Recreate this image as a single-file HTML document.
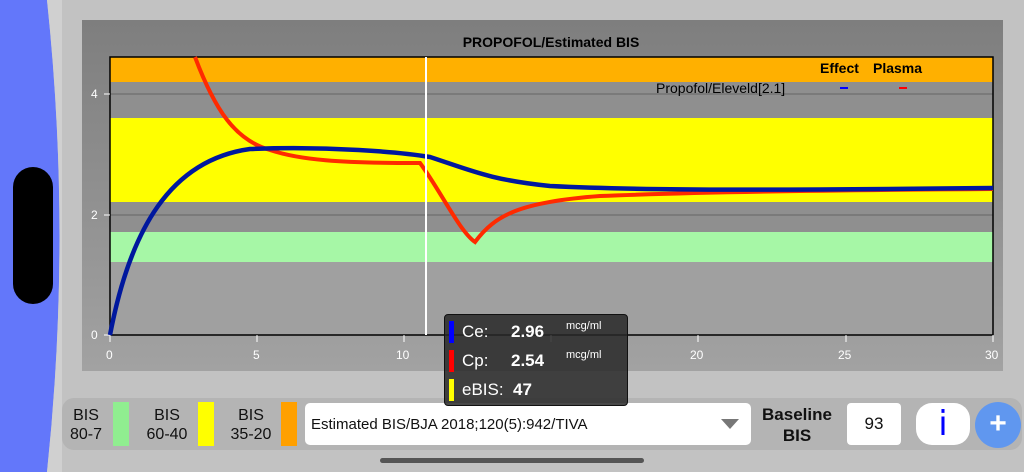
<!DOCTYPE html><html><head><style>
body{margin:0;width:1024px;height:472px;background:#c2c2c2;position:relative;overflow:hidden;font-family:"Liberation Sans",sans-serif}
.abs{position:absolute;white-space:nowrap}
</style></head><body>
<svg class="abs" style="left:0;top:0" width="1024" height="472">
<path d="M0 0 H47 Q72 236 47 472 H0Z" fill="#6377fa"/>
<path d="M47 0 Q72 236 47 472 H62 V0Z" fill="#d0d0d0"/>
<rect x="13" y="167" width="40" height="137" rx="20" fill="#000"/>
<defs><linearGradient id="g" x1="0" y1="0" x2="0" y2="1"><stop offset="0" stop-color="#7e7e7e"/><stop offset="1" stop-color="#a2a2a2"/></linearGradient></defs>
<rect x="82" y="20" width="921" height="351" fill="url(#g)"/>
<text x="551" y="47" font-size="14" font-weight="bold" text-anchor="middle" fill="#000">PROPOFOL/Estimated BIS</text>
<rect x="110" y="57" width="883" height="278" fill="#8f8f8f"/>
<rect x="110" y="262" width="883" height="73" fill="#a0a0a0"/>
<rect x="110" y="57" width="883" height="25" fill="#ffb000"/>
<rect x="110" y="118" width="883" height="84" fill="#ffff00"/>
<rect x="110" y="232" width="883" height="30" fill="#a6f7a6"/>
<line x1="110" y1="94" x2="993" y2="94" stroke="#666"/>
<line x1="110" y1="215" x2="993" y2="215" stroke="#666"/>
<rect x="110" y="57" width="883" height="278" fill="none" stroke="#000" stroke-width="1.5"/>
<g stroke="#fff" stroke-width="1">
<line x1="104" y1="94" x2="110" y2="94"/><line x1="104" y1="215" x2="110" y2="215"/><line x1="104" y1="335" x2="110" y2="335"/>
<line x1="110" y1="335" x2="110" y2="342"/><line x1="257" y1="335" x2="257" y2="342"/><line x1="404" y1="335" x2="404" y2="342"/><line x1="551" y1="335" x2="551" y2="342"/><line x1="698" y1="335" x2="698" y2="342"/><line x1="846" y1="335" x2="846" y2="342"/><line x1="993" y1="335" x2="993" y2="342"/>
</g>
<g fill="#fff" font-size="12"><text x="91" y="98">4</text><text x="91" y="219">2</text><text x="91" y="339">0</text>
<text x="106" y="359">0</text><text x="253" y="359">5</text><text x="396" y="359">10</text><text x="690" y="359">20</text><text x="838" y="359">25</text><text x="985" y="359">30</text></g>
<path d="M195 57 C215 110 235 140 270 150 C300 160 340 163 415 163 L420 163 C440 190 460 232 475 242 C495 215 520 202 600 196 C700 192 850 190 993 189" fill="none" stroke="#ff2a00" stroke-width="4"/>
<path d="M110 335 C130 230 170 160 250 149 C330 146 400 152 430 157 C470 170 490 180 550 186 C650 191 800 190 993 188" fill="none" stroke="#00189e" stroke-width="4.5"/>
<line x1="426" y1="57" x2="426" y2="335" stroke="#fff" stroke-width="2"/>
<text x="820" y="73" font-size="14" font-weight="bold">Effect</text><text x="873" y="73" font-size="14" font-weight="bold">Plasma</text>
<text x="656" y="93" font-size="14">Propofol/Eleveld[2.1]</text>
<line x1="840" y1="88" x2="848" y2="88" stroke="#00f" stroke-width="2"/><line x1="899" y1="88" x2="907" y2="88" stroke="#f00" stroke-width="2"/>
<rect x="62" y="398" width="960" height="52" rx="12" fill="#b4b4b4"/>
<rect x="380" y="458" width="264" height="5" rx="2.5" fill="#555"/>
</svg>
<div class="abs" style="left:62px;top:398px;width:960px;height:52px;font-size:16px;color:#111">
 <div class="abs" style="left:2px;top:8px;width:44px;text-align:center;line-height:19px">BIS<br>80-7</div>
 <div class="abs" style="left:51px;top:4px;width:16px;height:44px;background:#90ee90"></div>
 <div class="abs" style="left:80px;top:8px;width:50px;text-align:center;line-height:19px">BIS<br>60-40</div>
 <div class="abs" style="left:136px;top:4px;width:16px;height:44px;background:#ff0"></div>
 <div class="abs" style="left:164px;top:8px;width:50px;text-align:center;line-height:19px">BIS<br>35-20</div>
 <div class="abs" style="left:219px;top:4px;width:16px;height:44px;background:#ffa000"></div>
 <div class="abs" style="left:243px;top:5px;width:446px;height:42px;background:#fff;border-radius:5px"><span class="abs" style="left:6px;top:13px;font-size:15px">Estimated BIS/BJA 2018;120(5):942/TIVA</span>
 <svg class="abs" style="left:416px;top:16px" width="18" height="10"><path d="M0 0H18L9 10Z" fill="#777"/></svg></div>
 <div class="abs" style="left:700px;top:6px;width:70px;text-align:center;font-weight:bold;font-size:17px;line-height:21px">Baseline<br>BIS</div>
 <div class="abs" style="left:785px;top:5px;width:54px;height:42px;background:#fff;border-radius:4px;text-align:center;line-height:42px;font-size:17px">93</div>
 <div class="abs" style="left:854px;top:5px;width:54px;height:42px;background:#fff;border-radius:16px;text-align:center;line-height:42px;font-size:34px;color:#00f;font-family:'DejaVu Sans',sans-serif">i</div>
 <div class="abs" style="left:913px;top:4px;width:46px;height:46px;background:#6097ef;border-radius:50%;text-align:center;line-height:44px;font-size:30px;color:#fff;font-weight:bold">+</div>
</div>
<div class="abs" style="left:444px;top:314px;width:182px;height:90px;background:rgba(40,40,40,0.85);border:1px solid #111;border-radius:4px;color:#fff">
 <div class="abs" style="left:4px;top:6px;width:5px;height:22px;background:#00f"></div>
 <div class="abs" style="left:4px;top:35px;width:5px;height:22px;background:#f00"></div>
 <div class="abs" style="left:4px;top:64px;width:5px;height:22px;background:#ff0"></div>
 <span class="abs" style="left:17px;top:7px;font-size:17px">Ce:</span><span class="abs" style="left:66px;top:7px;font-size:17px;font-weight:bold">2.96</span><span class="abs" style="left:121px;top:5px;font-size:11px">mcg/ml</span>
 <span class="abs" style="left:17px;top:36px;font-size:17px">Cp:</span><span class="abs" style="left:66px;top:36px;font-size:17px;font-weight:bold">2.54</span><span class="abs" style="left:121px;top:34px;font-size:11px">mcg/ml</span>
 <span class="abs" style="left:17px;top:65px;font-size:17px">eBIS:</span><span class="abs" style="left:68px;top:65px;font-size:17px;font-weight:bold">47</span>
</div>
</body></html>
